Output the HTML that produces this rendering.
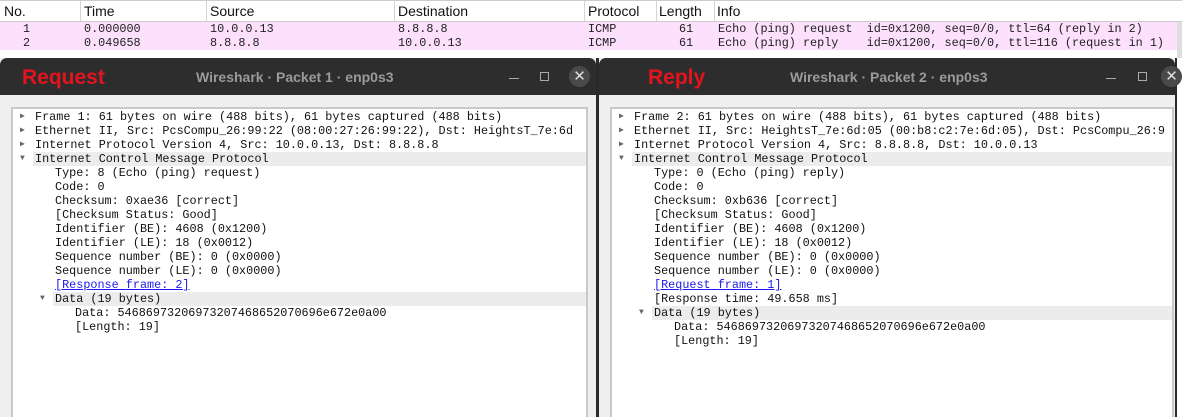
<!DOCTYPE html>
<html><head><meta charset="utf-8"><style>
*{margin:0;padding:0;box-sizing:border-box}
body{width:1182px;height:417px;overflow:hidden;background:#fff;position:relative;font-family:"Liberation Sans",sans-serif}
.hdr{position:absolute;top:0;left:0;width:1182px;height:22px;background:#fff;border-top:1px solid #ccc;border-bottom:1px solid #ccc;font-size:14px;color:#111}
.hdr span{position:absolute;top:2px}
.hdr i{position:absolute;top:0;height:21px;border-left:1px solid #d5d5d5}
.row{position:absolute;left:0;width:1177px;height:14px;background:#fce0fc;font-family:"Liberation Mono",monospace;font-size:11.8px;line-height:14px;color:#222;white-space:pre}
.row span{position:absolute;top:0}
.sb{position:absolute;right:0;top:22px;width:5px;height:36px;background:#ddd}
.win{position:absolute;top:58px;height:359px;background:#efefef;border-left:2px solid #2a2a2a;border-right:2px solid #2a2a2a}
.tb{position:absolute;top:0;left:0;right:0;height:37px;background:#2d2d2d;border-radius:7px 7px 0 0}
.tb .lab{position:absolute;top:8px;color:#e3141e;font-weight:bold;font-size:21px}
.tb .tt{position:absolute;top:11px;color:#9a9a9a;font-weight:bold;font-size:14px}
.tb .mn{position:absolute;top:20px;width:10px;border-top:1px solid #aaa}
.tb .mx{position:absolute;top:14px;width:9px;height:9px;border:1px solid #aaa}
.tb .cl{position:absolute;top:8px;width:21px;height:21px;border-radius:50%;background:#4a4a4a;color:#ddd;font-size:15px;text-align:center;line-height:21px}
.tree{position:absolute;top:49px;bottom:0;background:#fff;border:2px solid #c9c9c9;border-bottom:none;font-family:"Liberation Mono",monospace;font-size:11.8px;color:#111;overflow:hidden}
.l{position:absolute;left:0;right:0;height:14px;line-height:14px;white-space:pre}
.l.h{background:#ececec}
.ar{position:absolute;font-size:8px;color:#666;top:0}
a{color:#1a1aee;text-decoration:underline}
</style></head><body>
<div class="hdr">
<span style="left:4px">No.</span><i style="left:80px"></i>
<span style="left:84px">Time</span><i style="left:206px"></i>
<span style="left:210px">Source</span><i style="left:394px"></i>
<span style="left:398px">Destination</span><i style="left:584px"></i>
<span style="left:588px">Protocol</span><i style="left:656px"></i>
<span style="left:659px">Length</span><i style="left:714px"></i>
<span style="left:717px">Info</span>
</div>
<div class="row" style="top:22px"><span style="left:23px">1</span><span style="left:84px">0.000000</span><span style="left:210px">10.0.0.13</span><span style="left:398px">8.8.8.8</span><span style="left:588px">ICMP</span><span style="left:679px">61</span><span style="left:718px">Echo (ping) request  id=0x1200, seq=0/0, ttl=64 (reply in 2)</span></div>
<div class="row" style="top:36px"><span style="left:23px">2</span><span style="left:84px">0.049658</span><span style="left:210px">8.8.8.8</span><span style="left:398px">10.0.0.13</span><span style="left:588px">ICMP</span><span style="left:679px">61</span><span style="left:718px">Echo (ping) reply    id=0x1200, seq=0/0, ttl=116 (request in 1)</span></div>
<div class="sb"></div>

<div class="win" style="left:-2px;width:600px">
<div class="tb"><span class="lab" style="left:22px">Request</span><span class="tt" style="left:196px">Wireshark · Packet 1 · enp0s3</span><span class="mn" style="left:509px"></span><span class="mx" style="left:540px"></span><span class="cl" style="left:569px">✕</span></div>
<div class="tree" style="left:11px;width:577px">
<div class="l" style="top:1px"><span class="ar" style="left:7px">▶</span><span style="position:absolute;left:22px">Frame 1: 61 bytes on wire (488 bits), 61 bytes captured (488 bits)</span></div>
<div class="l" style="top:15px"><span class="ar" style="left:7px">▶</span><span style="position:absolute;left:22px">Ethernet II, Src: PcsCompu_26:99:22 (08:00:27:26:99:22), Dst: HeightsT_7e:6d</span></div>
<div class="l" style="top:29px"><span class="ar" style="left:7px">▶</span><span style="position:absolute;left:22px">Internet Protocol Version 4, Src: 10.0.0.13, Dst: 8.8.8.8</span></div>
<div class="l h" style="top:43px;left:20px"><span class="ar" style="left:-13px">▼</span><span style="position:absolute;left:2px">Internet Control Message Protocol</span></div>
<div class="l" style="top:57px"><span style="position:absolute;left:42px">Type: 8 (Echo (ping) request)</span></div>
<div class="l" style="top:71px"><span style="position:absolute;left:42px">Code: 0</span></div>
<div class="l" style="top:85px"><span style="position:absolute;left:42px">Checksum: 0xae36 [correct]</span></div>
<div class="l" style="top:99px"><span style="position:absolute;left:42px">[Checksum Status: Good]</span></div>
<div class="l" style="top:113px"><span style="position:absolute;left:42px">Identifier (BE): 4608 (0x1200)</span></div>
<div class="l" style="top:127px"><span style="position:absolute;left:42px">Identifier (LE): 18 (0x0012)</span></div>
<div class="l" style="top:141px"><span style="position:absolute;left:42px">Sequence number (BE): 0 (0x0000)</span></div>
<div class="l" style="top:155px"><span style="position:absolute;left:42px">Sequence number (LE): 0 (0x0000)</span></div>
<div class="l" style="top:169px"><a style="position:absolute;left:42px">[Response frame: 2]</a></div>
<div class="l h" style="top:183px;left:40px"><span class="ar" style="left:-13px">▼</span><span style="position:absolute;left:2px">Data (19 bytes)</span></div>
<div class="l" style="top:197px"><span style="position:absolute;left:62px">Data: 54686973206973207468652070696e672e0a00</span></div>
<div class="l" style="top:211px"><span style="position:absolute;left:62px">[Length: 19]</span></div>
</div>
</div>

<div class="win" style="left:597px;width:580px">
<div class="tb"><span class="lab" style="left:49px">Reply</span><span class="tt" style="left:191px">Wireshark · Packet 2 · enp0s3</span><span class="mn" style="left:507px"></span><span class="mx" style="left:539px"></span><span class="cl" style="left:562px">✕</span></div>
<div class="tree" style="left:11px;width:564px">
<div class="l" style="top:1px"><span class="ar" style="left:7px">▶</span><span style="position:absolute;left:22px">Frame 2: 61 bytes on wire (488 bits), 61 bytes captured (488 bits)</span></div>
<div class="l" style="top:15px"><span class="ar" style="left:7px">▶</span><span style="position:absolute;left:22px">Ethernet II, Src: HeightsT_7e:6d:05 (00:b8:c2:7e:6d:05), Dst: PcsCompu_26:9</span></div>
<div class="l" style="top:29px"><span class="ar" style="left:7px">▶</span><span style="position:absolute;left:22px">Internet Protocol Version 4, Src: 8.8.8.8, Dst: 10.0.0.13</span></div>
<div class="l h" style="top:43px;left:20px"><span class="ar" style="left:-13px">▼</span><span style="position:absolute;left:2px">Internet Control Message Protocol</span></div>
<div class="l" style="top:57px"><span style="position:absolute;left:42px">Type: 0 (Echo (ping) reply)</span></div>
<div class="l" style="top:71px"><span style="position:absolute;left:42px">Code: 0</span></div>
<div class="l" style="top:85px"><span style="position:absolute;left:42px">Checksum: 0xb636 [correct]</span></div>
<div class="l" style="top:99px"><span style="position:absolute;left:42px">[Checksum Status: Good]</span></div>
<div class="l" style="top:113px"><span style="position:absolute;left:42px">Identifier (BE): 4608 (0x1200)</span></div>
<div class="l" style="top:127px"><span style="position:absolute;left:42px">Identifier (LE): 18 (0x0012)</span></div>
<div class="l" style="top:141px"><span style="position:absolute;left:42px">Sequence number (BE): 0 (0x0000)</span></div>
<div class="l" style="top:155px"><span style="position:absolute;left:42px">Sequence number (LE): 0 (0x0000)</span></div>
<div class="l" style="top:169px"><a style="position:absolute;left:42px">[Request frame: 1]</a></div>
<div class="l" style="top:183px"><span style="position:absolute;left:42px">[Response time: 49.658 ms]</span></div>
<div class="l h" style="top:197px;left:40px"><span class="ar" style="left:-13px">▼</span><span style="position:absolute;left:2px">Data (19 bytes)</span></div>
<div class="l" style="top:211px"><span style="position:absolute;left:62px">Data: 54686973206973207468652070696e672e0a00</span></div>
<div class="l" style="top:225px"><span style="position:absolute;left:62px">[Length: 19]</span></div>
</div>
</div>
</body></html>
